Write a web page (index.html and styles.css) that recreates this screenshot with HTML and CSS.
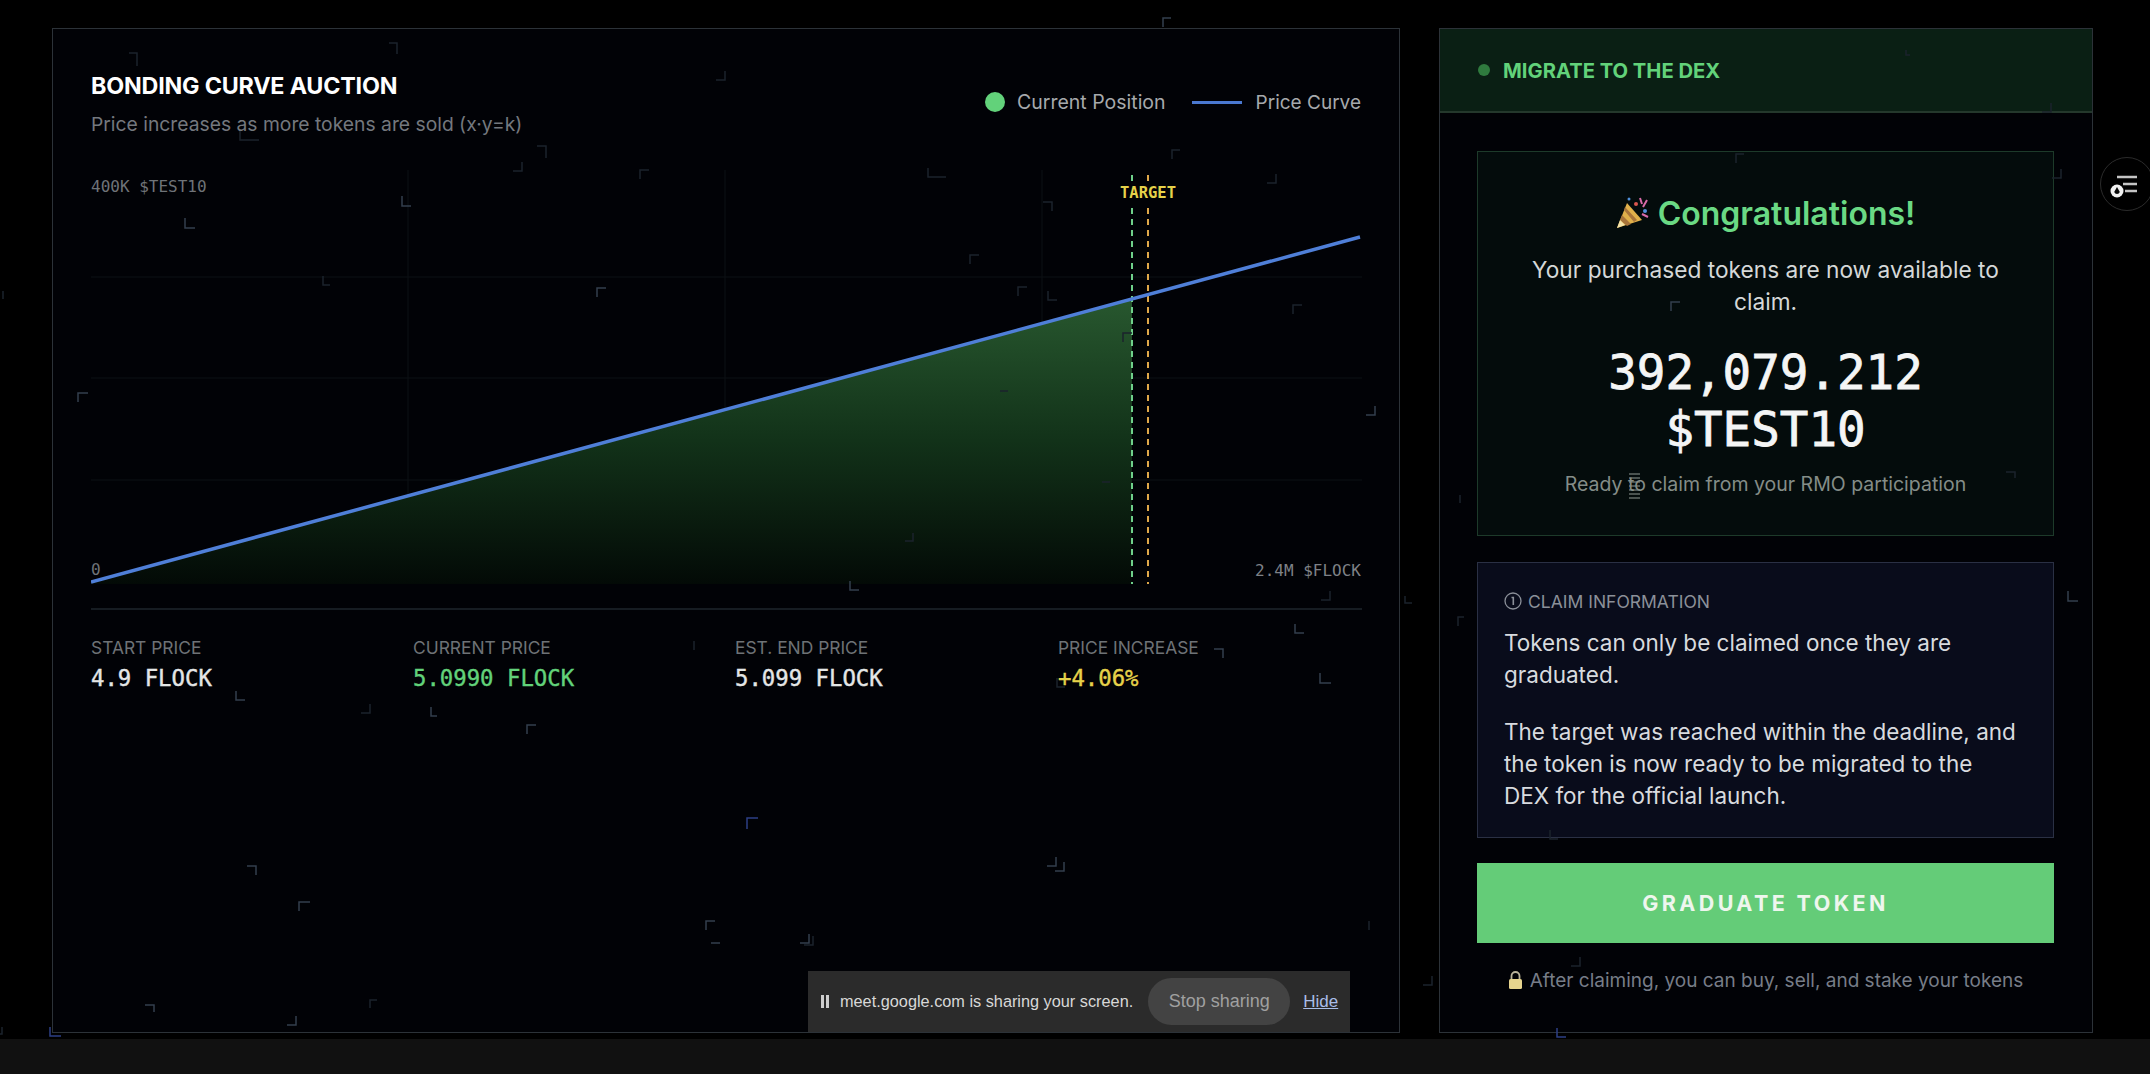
FILE: index.html
```html
<!DOCTYPE html>
<html lang="en">
<head>
    <meta charset="UTF-8">
    <meta name="viewport" content="width=device-width, initial-scale=1.0">
    <title>Bonding Curve Auction</title>
    <link rel="stylesheet" href="styles.css">
</head>
<body>
    <div class="page">
        <section class="panel chart-panel">
            <div class="chart-head">
                <div>
                    <h1 class="chart-title">BONDING CURVE AUCTION</h1>
                    <p class="chart-sub">Price increases as more tokens are sold (x·y=k)</p>
                </div>
                <div class="legend">
                    <span class="legend-dot"></span>
                    <span class="legend-text">Current Position</span>
                    <span class="legend-line"></span>
                    <span class="legend-text">Price Curve</span>
                </div>
            </div>

            <div class="chart">
                <svg class="chart-svg" width="1271" height="430" viewBox="0 0 1271 430">
                    <defs>
                        <linearGradient id="area" x1="0" y1="127" x2="0" y2="414" gradientUnits="userSpaceOnUse">
                            <stop offset="0" stop-color="#28582f"/>
                            <stop offset="0.5" stop-color="#123219"/>
                            <stop offset="1" stop-color="#030a06"/>
                        </linearGradient>
                    </defs>
                    <path class="grid" d="M0 107H1271M0 208H1271M0 310H1271M317 0V414M634 0V414M951 0V414"/>
                    <path d="M0 412L1041 129V414H0Z" fill="url(#area)"/>
                    <path class="target-green" d="M1041 5V414"/>
                    <path class="target-orange" d="M1057 5V414"/>
                    <path class="curve" d="M0 412L1269 67"/>
                </svg>
                <span class="axis-label axis-top">400K $TEST10</span>
                <span class="axis-label axis-zero">0</span>
                <span class="axis-label axis-right">2.4M $FLOCK</span>
                <span class="target-label">TARGET</span>
            </div>

            <div class="stats">
                <div>
                    <div class="stat-label">START PRICE</div>
                    <div class="stat-value">4.9 FLOCK</div>
                </div>
                <div>
                    <div class="stat-label">CURRENT PRICE</div>
                    <div class="stat-value green">5.0990 FLOCK</div>
                </div>
                <div>
                    <div class="stat-label">EST. END PRICE</div>
                    <div class="stat-value">5.099 FLOCK</div>
                </div>
                <div>
                    <div class="stat-label">PRICE INCREASE</div>
                    <div class="stat-value yellow">+4.06%</div>
                </div>
            </div>
        </section>

        <aside class="panel side-panel">
            <div class="side-head">
                <span class="side-dot"></span>
                <h2 class="side-title">MIGRATE TO THE DEX</h2>
            </div>
            <div class="side-body">
                <div class="claim-card">
                    <div class="congrats">
                        <svg width="34" height="32" viewBox="0 0 34 32">
                            <path d="M1 31L11 6L26 23Z" fill="#e0b04a"/>
                            <path d="M6 18L15 27L11 29L4 23ZM9 10L21 23L18 25L8 13Z" fill="#a8743a"/>
                            <path d="M1 31L4 23L9 28Z" fill="#f4e2a8"/>
                            <circle cx="20" cy="7" r="2" fill="#d9574f"/>
                            <circle cx="29" cy="14" r="2" fill="#4f8fd9"/>
                            <circle cx="13" cy="2" r="1.5" fill="#4f8fd9"/>
                            <path d="M24 1L26 7M31 3L27 10M32 20L26 17" stroke="#d96ba8" stroke-width="2" fill="none"/>
                        </svg>
                        <h3 class="congrats-text">Congratulations!</h3>
                    </div>
                    <p class="claim-text">Your purchased tokens are now available to claim.</p>
                    <div class="claim-amount">392,079.212<br>$TEST10</div>
                    <p class="claim-note">Ready <span class="glitch">to</span> claim from your RMO participation</p>
                </div>

                <div class="info-card">
                    <div class="info-head">
                        <svg width="18" height="18" viewBox="0 0 18 18">
                            <circle cx="9" cy="9" r="8" fill="none" stroke="#8b9099" stroke-width="1.3"/>
                            <path d="M7.5 5.5H9.3V13" fill="none" stroke="#8b9099" stroke-width="1.6"/>
                        </svg>
                        <span>CLAIM INFORMATION</span>
                    </div>
                    <p class="info-text">Tokens can only be claimed once they are graduated.</p>
                    <p class="info-text">The target was reached within the deadline, and the token is now ready to be migrated to the DEX for the official launch.</p>
                </div>

                <button class="graduate-btn">GRADUATE TOKEN</button>

                <div class="after-note">
                    <svg width="15" height="18" viewBox="0 0 15 18">
                        <path d="M3.5 8V5a4 4 0 0 1 8 0V8" fill="none" stroke="#b9b39a" stroke-width="1.8"/>
                        <rect x="1" y="8" width="13" height="10" rx="1.5" fill="#e6d48e"/>
                    </svg>
                    <span>After claiming, you can buy, sell, and stake your tokens</span>
                </div>
            </div>
        </aside>
    </div>

    <div class="bottom-bar"></div>

    <svg class="marks" width="2150" height="1074" viewBox="0 0 2150 1074">
        <path class="mark-dim" d="M129 53h8v13M389 43h8v11M716 80h9v-9M240 131v9h19M537 146h9v12M513 171h9v-9M640 179v-9h9M323 276v9h7M1172 159v-9h8M928 168v9h18M1267 183h9v-9M1043 202h9v9M970 264v-9h9M1018 296v-9h9M1048 291v9h9M1293 314v-9h9M1123 342v-9h9M361 713h9v-9M694 641v9M1321 600h9v-9M1057 678v9h8M1906 50v5h4M2042 112h9v-9M1736 163v-9h8M2052 178h9v-9M2006 472h9v6M1460 495v8M1458 626v-9h6M1550 830v9h8M1369 921v9M1571 966h9v-9M1423 985h9v-9M370 1008v-8h7M905 541h8v-8M1110 482h-8M1008 391h-8M1412 603h-7v-7M3 299v-8M2 1027v7h-6M804 945h9v-9"/>
        <path class="mark-mid" d="M402 196v10h9M185 218v10h10M597 297v-9h9M236 691v9h9M431 707v9h6M527 734v-9h9M1295 624v9h9M1214 649h9v9M1320 673v10h11M2068 591v10h10M1671 311v-9h9M1163 27v-9h8M78 402v-9h10M1375 406v9h-9M850 581v9h9M1056 857v9h-9M247 866h9v9M299 911v-9h11M706 930v-9h9M720 943h-9M809 934v9h-9M154 1012v-7h-9M296 1016v9h-9M1064 862v9h-9"/>
        <path class="mark-blue" d="M747 829v-11h11M50 1027v9h11M1557 1028v9h9"/>
    </svg>

    <div class="share-bar">
        <span class="pause"></span>
        <span class="share-text">meet.google.com is sharing your screen.</span>
        <button class="stop-btn">Stop sharing</button>
        <span class="hide-link">Hide</span>
    </div>

    <button class="float-btn">
        <svg width="32" height="28" viewBox="0 0 32 28">
            <path d="M10 7H30M16 14H30M18 21H30" stroke="#c4c4c4" stroke-width="2.5" fill="none"/>
            <circle cx="10" cy="21" r="6.5" fill="#f2f2f2"/>
            <path d="M10 17L12.8 22A3 3 0 0 1 7.2 22Z" fill="#0a0a0a"/>
        </svg>
    </button>
</body>
</html>
```

FILE: styles.css
```css
*{
  box-sizing: border-box;
}

body{
  margin: 0;
  width: 2150px;
  height: 1074px;
  overflow: hidden;
  position: relative;
  background-color: #000;
  font-family: Inter, "Noto Sans", sans-serif;
  color: #fff;
}

h1, h2, h3, p{
  margin: 0;
}

.page{
  display: flex;
  gap: 39px;
  padding: 28px 0 0 52px;
  height: 1039px;
}

.panel{
  height: 1005px;
  border: 1px solid #2c3238;
  background-color: #010206;
}

/* left side */

.chart-panel{
  width: 1348px;
  padding: 42px 36px 0 38px;
}

.chart-head{
  display: flex;
  justify-content: space-between;
  width: 1271px;
}

.chart-title{
  font-size: 23.3px;
  font-weight: 700;
  line-height: 30px;
  letter-spacing: -0.2px;
}

.chart-sub{
  margin-top: 11px;
  font-size: 19.3px;
  line-height: 24px;
  color: #74787e;
}

.legend{
  display: flex;
  align-items: center;
  height: 28px;
  margin-top: 17px;
  margin-right: 1px;
}

.legend-dot{
  width: 20px;
  height: 20px;
  margin-right: 12px;
  border-radius: 50%;
  background-color: #62d27a;
}

.legend-line{
  width: 50px;
  height: 3px;
  margin: 0 14px 0 26px;
  background-color: #4a78d0;
}

.legend-text{
  font-size: 19.5px;
  color: #a6a9ac;
}

.legend-text:last-child{
  font-size: 19px;
}

.chart{
  position: relative;
  width: 1271px;
  height: 430px;
  margin-top: 34px;
}

.chart-svg{
  display: block;
}

.grid{
  stroke: #0c1114;
  stroke-width: 1;
  fill: none;
}

.curve{
  stroke: #4f7fd8;
  stroke-width: 3.5;
  fill: none;
}

.target-green{
  stroke: #6fd08a;
  stroke-width: 2;
  stroke-dasharray: 6 5;
}

.target-orange{
  stroke: #e0a94a;
  stroke-width: 2;
  stroke-dasharray: 6 5;
}

.axis-label{
  position: absolute;
  font-family: "DejaVu Sans Mono", monospace;
  font-size: 16px;
  line-height: 18px;
  color: #6f7378;
}

.axis-top{
  left: 0;
  top: 8px;
}

.axis-zero{
  left: 0;
  top: 391px;
}

.axis-right{
  right: 1px;
  top: 392px;
  color: #7e8186;
}

.target-label{
  position: absolute;
  left: 1029px;
  top: 12px;
  padding: 2px 0;
  background-color: #010206;
  font-family: "DejaVu Sans Mono", monospace;
  font-size: 15.5px;
  font-weight: 700;
  line-height: 18px;
  color: #e6d24a;
}

.stats{
  display: grid;
  grid-template-columns: 322px 322px 323px 1fr;
  width: 1271px;
  margin-top: 8px;
  padding-top: 26px;
  border-top: 2px solid #161c22;
}

.stat-label{
  font-size: 17.4px;
  line-height: 24px;
  color: #6e7276;
}

.stat-value{
  margin-top: 4px;
  font-family: "DejaVu Sans Mono", monospace;
  font-size: 22.3px;
  line-height: 28px;
  color: #e4e6e6;
  -webkit-text-stroke: 0.4px currentColor;
}

.green{
  color: #62d27a;
}

.yellow{
  color: #e6d24a;
}

/* right side */

.side-panel{
  width: 654px;
}

.side-head{
  display: flex;
  align-items: center;
  gap: 13px;
  height: 84px;
  padding-left: 38px;
  border-bottom: 2px solid #24382c;
  background-color: #0a1f14;
}

.side-dot{
  width: 12px;
  height: 12px;
  border-radius: 50%;
  background-color: #2f7a3e;
}

.side-title{
  font-size: 20.2px;
  font-weight: 700;
  color: #62d27a;
}

.side-body{
  padding: 38px 38px 0 37px;
}

.claim-card{
  height: 385px;
  padding: 41px 20px 0;
  border: 1px solid #1d3a2a;
  background-color: #040c0c;
  text-align: center;
}

.congrats{
  display: flex;
  align-items: center;
  justify-content: center;
  gap: 8px;
  height: 40px;
}

.congrats-text{
  font-size: 32px;
  font-weight: 600;
  color: #6ad984;
}

.claim-text{
  margin-top: 21px;
  padding: 0 20px;
  font-size: 22.7px;
  line-height: 32px;
  color: #d5d8d8;
}

.claim-amount{
  margin-top: 26px;
  font-family: "DejaVu Sans Mono", monospace;
  font-size: 47.5px;
  line-height: 57px;
  color: #f4f5f5;
  -webkit-text-stroke: 0.8px currentColor;
}

.claim-note{
  margin-top: 12px;
  font-size: 19.5px;
  line-height: 28px;
  color: #848d88;
}

.glitch{
  position: relative;
}

.glitch::after{
  content: "";
  position: absolute;
  left: 1px;
  top: 1px;
  width: 11px;
  height: 26px;
  background: repeating-linear-gradient(0deg, rgba(132, 141, 136, 0.55) 0 2px, transparent 2px 4px);
}

.info-card{
  height: 276px;
  margin-top: 26px;
  padding: 26px 26px 0;
  border: 1px solid #2a3044;
  background-color: #090c1b;
}

.info-head{
  display: flex;
  align-items: center;
  gap: 6px;
  height: 24px;
  margin-bottom: 14px;
  font-size: 17.5px;
  color: #8b9099;
}

.info-text{
  max-width: 516px;
  margin-bottom: 25px;
  font-size: 22.5px;
  line-height: 32px;
  color: #d8dbdf;
}

.graduate-btn{
  display: block;
  width: 577px;
  height: 80px;
  margin-top: 25px;
  border: none;
  background-color: #64cc78;
  font-family: Inter, sans-serif;
  font-size: 21.5px;
  font-weight: 700;
  letter-spacing: 3.4px;
  color: #eef6ee;
}

.after-note{
  display: flex;
  align-items: center;
  justify-content: center;
  gap: 7px;
  height: 24px;
  margin-top: 25px;
  font-size: 19px;
  color: #777d88;
}

/* bottom and things lying over the page */

.bottom-bar{
  height: 35px;
  background-color: #111;
}

.marks{
  position: absolute;
  left: 0;
  top: 0;
  pointer-events: none;
}

.marks path{
  fill: none;
  stroke-width: 1.5;
}

.mark-dim{
  stroke: #1b232c;
}

.mark-mid{
  stroke: #333f4e;
}

.mark-blue{
  stroke: #2c3f85;
}

.share-bar{
  position: absolute;
  left: 808px;
  top: 971px;
  display: flex;
  align-items: center;
  width: 542px;
  height: 61px;
  padding-left: 13px;
  background-color: #2b2b2b;
  font-family: "Liberation Sans", Arial, sans-serif;
  font-size: 16.3px;
}

.pause{
  width: 8px;
  height: 13px;
  margin-right: 11px;
  border-left: 3px solid #cfcfcf;
  border-right: 3px solid #cfcfcf;
}

.share-text{
  color: #d8d8d8;
}

.stop-btn{
  width: 142px;
  height: 47px;
  margin-left: 15px;
  border: none;
  border-radius: 24px;
  background-color: #434343;
  font-family: inherit;
  font-size: 18px;
  color: #a0a0a0;
}

.hide-link{
  margin-left: 13px;
  font-size: 17px;
  color: #a9bde8;
  text-decoration: underline;
}

.float-btn{
  position: absolute;
  left: 2100px;
  top: 157px;
  display: flex;
  align-items: center;
  width: 54px;
  height: 54px;
  padding: 0 0 0 6px;
  border: 1px solid #2b2b2b;
  border-radius: 50%;
  background-color: #000;
}
```
